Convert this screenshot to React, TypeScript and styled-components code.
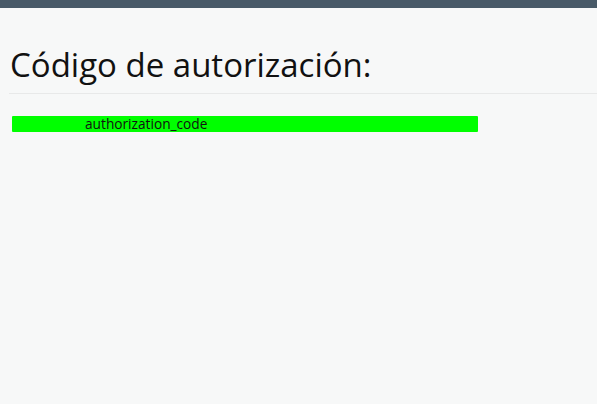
import React from 'react'
import styled, { createGlobalStyle } from 'styled-components'

const GlobalStyle = createGlobalStyle`
  html, body {
    margin: 0;
    padding: 0;
    background: #f7f8f8;
    font-family: "Open Sans", "Liberation Sans", sans-serif;
  }
`

const TopBar = styled.div`
  height: 8px;
  background: #485a68;
`

const Content = styled.div`
  padding: 0 0 0 9px;
`

const Title = styled.h1`
  margin: 0;
  padding: 37px 0 8px 1px;
  font-size: 33px;
  font-weight: 400;
  line-height: 40px;
  color: #111;
  border-bottom: 1px solid #e8e9e9;
`

const CodeBar = styled.div`
  margin: 22px 0 0 3px;
  width: 466px;
  height: 16px;
  background: #00ff00;
  border-radius: 1px;
  padding-left: 73px;
  box-sizing: border-box;
  font-size: 13.7px;
  line-height: 16px;
  color: #111;
`

export default function App() {
  return (
    <>
      <GlobalStyle />
      <TopBar />
      <Content>
        <Title>Código de autorización:</Title>
        <CodeBar>authorization_code</CodeBar>
      </Content>
    </>
  )
}
